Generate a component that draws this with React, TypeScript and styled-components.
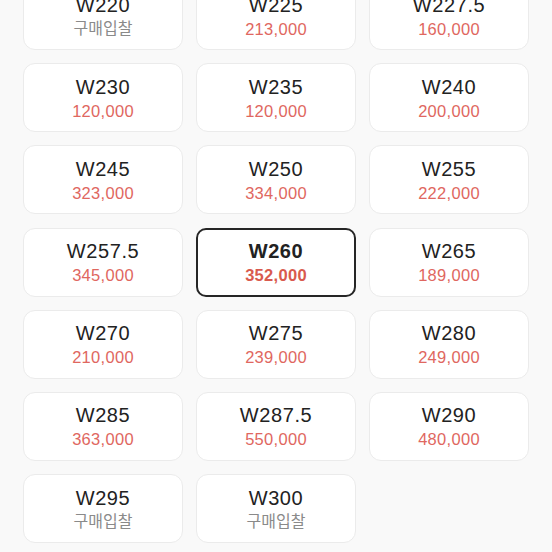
import React from 'react';
import styled, { createGlobalStyle } from 'styled-components';

type sizeType = { size: string; price?: string };

const sizes: sizeType[] = [
  { size: 'W220' },
  { size: 'W225', price: '213,000' },
  { size: 'W227.5', price: '160,000' },
  { size: 'W230', price: '120,000' },
  { size: 'W235', price: '120,000' },
  { size: 'W240', price: '200,000' },
  { size: 'W245', price: '323,000' },
  { size: 'W250', price: '334,000' },
  { size: 'W255', price: '222,000' },
  { size: 'W257.5', price: '345,000' },
  { size: 'W260', price: '352,000' },
  { size: 'W265', price: '189,000' },
  { size: 'W270', price: '210,000' },
  { size: 'W275', price: '239,000' },
  { size: 'W280', price: '249,000' },
  { size: 'W285', price: '363,000' },
  { size: 'W287.5', price: '550,000' },
  { size: 'W290', price: '480,000' },
  { size: 'W295' },
  { size: 'W300' },
];

const selectedSize = 'W260';

const App = () => {
  return (
    <>
      <GlobalStyle />
      <SPage>
        <SGrid>
          {sizes.map(({ size, price }) => {
            const selected = size === selectedSize;
            return (
              <SCard key={size} $selected={selected}>
                <SSize $selected={selected}>{size}</SSize>
                {price ? (
                  <SPrice $selected={selected}>{price}</SPrice>
                ) : (
                  <SBid>구매입찰</SBid>
                )}
              </SCard>
            );
          })}
        </SGrid>
      </SPage>
    </>
  );
};

export default App;

const GlobalStyle = createGlobalStyle`
  body {
    margin: 0;
    background: #f9f9f9;
    font-family: "Liberation Sans", "Noto Sans CJK KR", sans-serif;
  }
`;

const SPage = styled.div`
  width: 552px;
  height: 552px;
  overflow: hidden;
  background: #f9f9f9;
`;

const SGrid = styled.div`
  display: grid;
  grid-template-columns: repeat(3, 160px);
  grid-auto-rows: 69px;
  column-gap: 13px;
  row-gap: 13.2px;
  padding: 0 23px;
  margin-top: -19px;
`;

const SCard = styled.div<{ $selected: boolean }>`
  box-sizing: border-box;
  display: flex;
  flex-direction: column;
  align-items: center;
  justify-content: center;
  padding-top: 2px;
  background: #ffffff;
  border: ${({ $selected }) => ($selected ? 'solid 2px #262626' : 'solid 1px #ebebeb')};
  border-radius: ${({ $selected }) => ($selected ? '10px' : '12px')};
`;

const SSize = styled.div<{ $selected: boolean }>`
  font-size: 20px;
  line-height: 24px;
  letter-spacing: 0.6px;
  color: #222222;
  font-weight: ${({ $selected }) => ($selected ? 700 : 400)};
`;

const SPrice = styled.div<{ $selected: boolean }>`
  font-size: 16.5px;
  line-height: 24px;
  letter-spacing: 0.3px;
  color: ${({ $selected }) => ($selected ? '#d95a4e' : '#e0675f')};
  font-weight: ${({ $selected }) => ($selected ? 700 : 400)};
`;

const SBid = styled.div`
  font-size: 16px;
  line-height: 24px;
  color: #8a8a8a;
`;
